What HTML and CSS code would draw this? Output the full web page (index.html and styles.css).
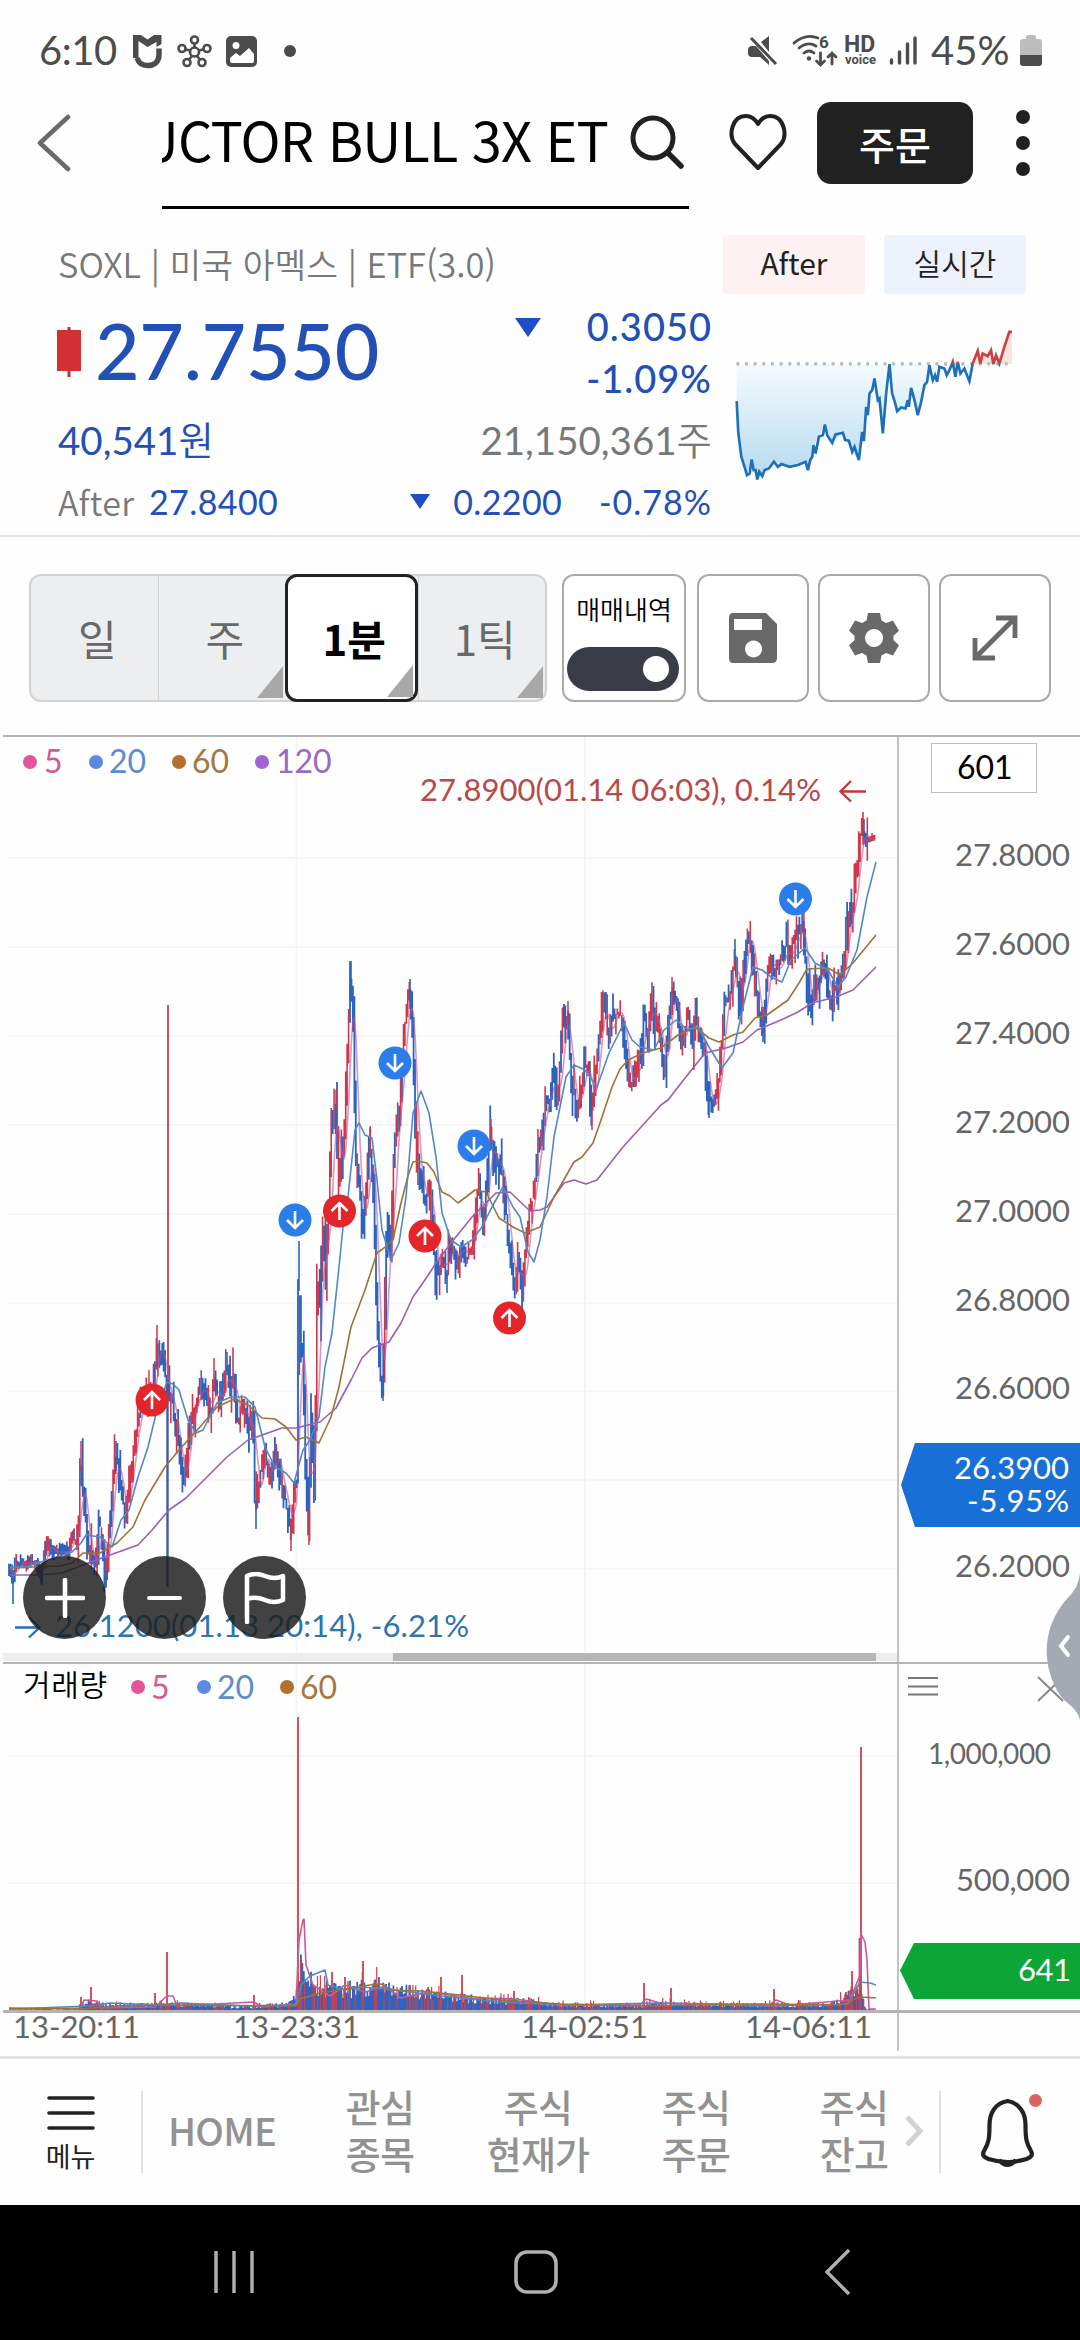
FILE: index.html
```html
<!DOCTYPE html>
<html lang="ko">
<head>
    <meta charset="UTF-8">
    <meta name="viewport" content="width=device-width, initial-scale=1.0">
    <title>SOXL 차트</title>
    <link rel="stylesheet" href="styles.css">
</head>
<body>
    <!-- Status bar -->
    <div class="status-bar">
        <span class="clock">6:10</span>
        <svg class="status-left" viewBox="130 30 172 44" width="172" height="44">
            <path d="M133 35l8 0 6.500 4.500 6.500-4.500h7.500v9l-5 3v-5l-9 5-9-6v17h-5.500z" fill="#4c4c4c"/>
            <path d="M137 58c2 6 6 7.500 10.500 7.500 7 0 11.500-4 11.500-11v-6" fill="none" stroke="#4c4c4c" stroke-width="5.500"/>
            <g fill="none" stroke="#4c4c4c" stroke-width="2.600">
                <circle cx="194.500" cy="52" r="4.500"/><circle cx="194.500" cy="40" r="3.500"/>
                <circle cx="182" cy="48.500" r="3.500"/><circle cx="207" cy="48.500" r="3.500"/>
                <circle cx="187" cy="62.500" r="3.500"/><circle cx="202" cy="62.500" r="3.500"/>
                <path d="M194.500 44v4M186 49.500l4 1M203 49.500l-4 1M189 59.500l3-3.500M200 59.500l-3-3.500"/>
            </g>
            <rect x="226" y="36" width="31" height="31" rx="5" fill="#4c4c4c"/>
            <circle cx="236" cy="45.500" r="3.500" fill="#fff"/>
            <path d="M230 58l6-5 4 3 9-8 5 6v7q0 2-2 2h-20q-2 0-2-2z" fill="#fff"/>
            <circle cx="290" cy="51" r="6" fill="#4c4c4c"/>
        </svg>
        <svg class="status-right" viewBox="744 30 180 44" width="180" height="44">
            <g fill="#4c4c4c">
                <path d="M747 50q0-4 4-4h4l13 15v4l-9-8h-8q-4 0-4-4zM760 42l8-6v16z"/>
                <path d="M750 38l25 26" stroke="#4c4c4c" stroke-width="3"/>
                <circle cx="808" cy="58.500" r="2.200"/>
            </g>
            <g fill="none" stroke="#4c4c4c" stroke-width="2.800" stroke-linecap="round">
                <path d="M793 43q12-10 24-5M798 48q9-7 17-2M803 53q5-4 10 0"/>
                <path d="M819.500 53v12M815.500 61l4 4 4-4M831 64v-11M827 57l4-4 4 4"/>
            </g>
            <text x="818" y="48" class="st-six">6</text>
            <text x="843" y="52" class="st-hd">HD</text>
            <text x="844" y="64" class="st-voice">voice</text>
            <g stroke="#4c4c4c" stroke-width="3.400" stroke-linecap="round">
                <path d="M890.500 60v3M898.500 52v11M906.500 44v19M914 38v25"/>
            </g>
        </svg>
        <span class="battery-text">45%</span>
        <svg class="battery" viewBox="0 0 22 32" width="22" height="32">
            <path d="M6 4V2q0-2 2-2h6q2 0 2 2v2h3q3 0 3 3v13H0V7q0-3 3-3z" fill="#bdbdbd"/>
            <path d="M0 20h22v8q0 3-3 3H3q-3 0-3-3z" fill="#4c4c4c"/>
        </svg>
    </div>

    <!-- Title bar -->
    <div class="title-bar">
        <svg class="back" viewBox="0 0 34 58" width="34" height="58">
            <path d="M31 3L3 29l28 26" fill="none" stroke="#6a6a6a" stroke-width="4.500" stroke-linecap="round" stroke-linejoin="round"/>
        </svg>
        <div class="search-box">
            <div class="ticker-name"><span>UCTOR BULL 3X ET</span></div>
            <svg viewBox="0 0 58 58" width="58" height="58">
                <circle cx="24" cy="24" r="20" fill="none" stroke="#212121" stroke-width="5"/>
                <path d="M39 39l13 13" stroke="#212121" stroke-width="5.500" stroke-linecap="round"/>
            </svg>
        </div>
        <svg class="heart" viewBox="0 0 58 58" width="58" height="58">
            <path d="M29 55L6 31C-1 22 3 3 17 3c6 0 9 3 12 8 3-5 6-8 12-8 14 0 18 19 11 28z" fill="none" stroke="#212121" stroke-width="4" stroke-linejoin="round"/>
        </svg>
        <button class="order-btn">주문</button>
        <div class="more"><i></i><i></i><i></i></div>
    </div>

    <!-- Quote summary -->
    <div class="quote">
        <div class="quote-info">
            <div class="market">SOXL | 미국 아멕스 | ETF(3.0)</div>
            <div class="price-row">
                <svg class="candle" viewBox="0 0 24 50" width="24" height="50">
                    <path d="M12 0v50" stroke="#c03030" stroke-width="3"/>
                    <rect y="3" width="24" height="41" fill="#d33034"/>
                </svg>
                <span class="price">27.7550</span>
                <span class="arrow"></span>
                <div class="change">
                    <div>0.3050</div>
                    <div>-1.09%</div>
                </div>
            </div>
            <div class="won-row">
                <span class="won">40,541<b>원</b></span>
                <span class="volume">21,150,361<b>주</b></span>
            </div>
            <div class="after-row">
                <span class="after-label">After</span>
                <span class="after-price">27.8400</span>
                <span class="arrow small"></span>
                <span class="after-diff">0.2200</span>
                <span class="after-rate">-0.78%</span>
            </div>
        </div>
        <div class="quote-side">
            <div class="tags">
                <span class="tag tag-after">After</span>
                <span class="tag tag-live">실시간</span>
            </div>
            <svg class="mini-chart" viewBox="520 900 850 500" width="283" height="167">
                <defs>
                    <linearGradient id="blueFill" gradientUnits="userSpaceOnUse" x1="0" y1="1030" x2="0" y2="1380">
                        <stop offset="0" stop-color="#f5fbfe"/>
                        <stop offset="1" stop-color="#b4daef"/>
                    </linearGradient>
                    <clipPath id="above"><rect x="520" y="900" width="850" height="131"/></clipPath>
                    <clipPath id="below"><rect x="520" y="1031" width="850" height="369"/></clipPath>
                    <polyline id="mini" points="531,1143 536,1240 545,1310 556,1345 562,1365 570,1360 576,1318 582,1350 588,1350 593,1378 599,1355 608,1368 615,1350 628,1345 643,1325 655,1340 665,1332 690,1340 715,1335 738,1325 745,1350 752,1320 758,1310 762,1275 768,1300 778,1250 790,1245 796,1213 803,1245 818,1268 828,1243 850,1238 857,1260 868,1262 878,1295 885,1280 898,1320 908,1235 913,1263 920,1160 925,1185 930,1120 938,1110 945,1075 955,1140 960,1135 970,1240 980,1120 990,1032 998,1120 1006,1145 1013,1173 1025,1162 1038,1165 1045,1140 1048,1160 1055,1103 1065,1140 1075,1185 1085,1145 1095,1095 1103,1085 1110,1035 1120,1080 1127,1065 1133,1085 1140,1040 1155,1045 1162,1065 1170,1050 1180,1025 1188,1070 1195,1025 1203,1060 1215,1045 1230,1083 1240,1030 1255,992 1263,1030 1270,1000 1285,1008 1295,990 1302,1032 1310,1005 1320,1030 1335,980 1350,935 1358,935"/>
                    <path id="miniArea" d="M531 1031V1143L536 1240 545 1310 562 1365 576 1318 593 1378 615 1350 643 1325 690 1340 738 1325 745 1350 762 1275 778 1250 796 1213 818 1268 850 1238 878 1295 898 1320 920 1160 945 1075 970 1240 990 1032 1013 1173 1038 1165 1055 1103 1075 1185 1110 1035 1133 1085 1140 1040 1170 1050 1215 1045 1230 1083 1240 1031z"/>
                </defs>
                <use href="#miniArea" fill="url(#blueFill)"/>
                <path d="M1240 1031L1255 992 1285 1008 1320 1030 1350 935 1358 935V1031z" fill="#fbe3e1"/>
                <path d="M530 1031H1350" stroke="#b9b9b9" stroke-width="10" stroke-dasharray="9 17"/>
                <use href="#mini" class="mini-line blue" clip-path="url(#below)"/>
                <use href="#mini" class="mini-line red" clip-path="url(#above)"/>
            </svg>
        </div>
    </div>

    <!-- Period and tool buttons -->
    <div class="toolbar">
        <div class="periods">
            <button class="period">일</button>
            <button class="period has-menu">주</button>
            <button class="period has-menu active">1분</button>
            <button class="period has-menu">1틱</button>
        </div>
        <div class="trade-toggle">
            <span>매매내역</span>
            <div class="switch"><i></i></div>
        </div>
        <button class="tool">
            <svg viewBox="0 0 50 52" width="50" height="52">
                <path fill-rule="evenodd" fill="#696969" d="M5 1h33l11 11v34q0 5-5 5H5q-4 0-4-5V6q0-5 4-5zM6 7v11h28V7zM25.500 28.500a8.500 8.500 0 1 0 .1 0z"/>
            </svg>
        </button>
        <button class="tool">
            <svg viewBox="0 0 50 50" width="50" height="50">
                <path fill-rule="evenodd" fill="#696969" d="M19 0h12l1.500 7.500 4.500 2.600 7-2.600 6 10.200-5.500 5v4.600l5.500 5-6 10.200-7-2.600-4.500 2.600L31 50H19l-1.500-7.500-4.500-2.600-7 2.600-6-10.200 5.500-5v-4.600l-5.500-5L6 7.500l7 2.600 4.500-2.600zM25 16a9 9 0 1 0 .1 0z"/>
            </svg>
        </button>
        <button class="tool">
            <svg viewBox="0 0 46 46" width="46" height="46">
                <path fill="none" stroke="#696969" stroke-width="4.800" d="M3 43L43 3M24 3h19v20M3 23v20h20"/>
            </svg>
        </button>
    </div>

    <!-- Price and volume chart -->
    <div class="chart">
        <svg class="chart-svg" viewBox="0 734 1080 1322" width="1080" height="1322">
            <g class="grid">
                <path d="M8 858H897M8 947H897M8 1036H897M8 1125H897M8 1214H897M8 1303H897M8 1391H897M8 1480H897M8 1569H897M8 1756H897M8 1883H897"/>
                <path d="M296.500 736V2010M585 736V2010"/>
            </g>
            <g id="volume"></g>
            <g id="candles"></g>
            <g id="averages"></g>

            <rect x="3" y="1653" width="894" height="8" fill="#ededed"/>
            <rect x="393" y="1653" width="483" height="8" fill="#b6b6b6"/>
            <g class="frame">
                <path d="M3 736H1080M3 1663H1080" stroke-width="2"/>
                <path d="M898 736V2051" stroke-width="1.600"/>
                <path d="M3 2011.500H1080" stroke-width="3"/>
            </g>

            <!-- moving average legend -->
            <g class="legend">
                <circle cx="30" cy="762" r="7" fill="#e2559a"/><text x="44" y="772.500" fill="#cf5c94">5</text>
                <circle cx="96" cy="762" r="7" fill="#5a8ae4"/><text x="109" y="772.500" fill="#5b8ccb">20</text>
                <circle cx="179" cy="762" r="7" fill="#b4702c"/><text x="192" y="772.500" fill="#a5773f">60</text>
                <circle cx="262" cy="762" r="7" fill="#a063d8"/><text x="276" y="772.500" fill="#9a68c4">120</text>
                <text x="23" y="1696" class="vol-title" textLength="84">거래량</text>
                <circle cx="138" cy="1687" r="7" fill="#e2559a"/><text x="151" y="1698.500" fill="#cf5c94">5</text>
                <circle cx="204" cy="1687" r="7" fill="#5a8ae4"/><text x="217" y="1698.500" fill="#5b8ccb">20</text>
                <circle cx="287" cy="1687" r="7" fill="#b4702c"/><text x="300" y="1698.500" fill="#a5773f">60</text>
            </g>

            <text x="420" y="800.500" class="hi" textLength="401">27.8900(01.14 06:03), 0.14%</text>
            <path d="M866 791.500H841M851 781l-10.500 10.500 10.500 10" class="hi-arrow"/>
            <text x="55" y="1636.500" class="lo" textLength="414">26.1200(01.13 20:14), -6.21%</text>
            <path d="M15 1627.500H39M29 1617l10.500 10.500-10.500 10" class="lo-arrow"/>

            <g id="markers"></g>

            <!-- right axis -->
            <rect x="931.500" y="743.500" width="105" height="49" fill="#fff" stroke="#bdbdbd"/>
            <text x="957" y="779" class="count">601</text>
            <g class="axis">
                <text x="955" y="866" textLength="115">27.8000</text>
                <text x="955" y="955" textLength="115">27.6000</text>
                <text x="955" y="1044" textLength="115">27.4000</text>
                <text x="955" y="1133" textLength="115">27.2000</text>
                <text x="955" y="1222" textLength="115">27.0000</text>
                <text x="955" y="1311" textLength="115">26.8000</text>
                <text x="955" y="1399" textLength="115">26.6000</text>
                <text x="955" y="1577" textLength="115">26.2000</text>
                <text x="928" y="1764" class="small" textLength="123">1,000,000</text>
                <text x="956" y="1890.500" textLength="114">500,000</text>
                <text x="13" y="2038" textLength="127">13-20:11</text>
                <text x="233" y="2038" textLength="127">13-23:31</text>
                <text x="521" y="2038" textLength="127">14-02:51</text>
                <text x="745" y="2038" textLength="127">14-06:11</text>
            </g>
            <path d="M901 1485l14-42h165v84H915z" fill="#186fd6"/>
            <path d="M900 1970.500l14-27.500h166v56H914z" fill="#0ca636"/>
            <g class="tag-text">
                <text x="954" y="1478.500" textLength="115">26.3900</text>
                <text x="967" y="1512" textLength="102">-5.95%</text>
                <text x="1018" y="1980.500" textLength="53">641</text>
            </g>
            <path d="M908 1678h30M908 1686.500h30M908 1694.500h30" stroke="#777" stroke-width="2"/>
            <path d="M1038 1677l25 24M1063 1677l-25 24" stroke="#888" stroke-width="2"/>
            <path d="M1080 1573c-2 18-11 22-18 32-20 27-20 62-2 90 6 9 17 12 20 25z" fill="#a4a9b4"/>
            <path d="M1068 1637l-7 9 7 9" fill="none" stroke="#fff" stroke-width="4" stroke-linecap="round"/>
        </svg>
        <div class="float-buttons">
            <button><svg viewBox="0 0 40 40" width="40" height="40"><path d="M20 2v36M2 20h36" stroke="#fff" stroke-width="4.500" stroke-linecap="round"/></svg></button>
            <button><svg viewBox="0 0 40 40" width="40" height="40"><path d="M4 20h31" stroke="#fff" stroke-width="4" stroke-linecap="round"/></svg></button>
            <button><svg viewBox="0 0 44 52" width="44" height="52"><path d="M4 50V4q8-4 18 0 10 4 18 0v24q-9 4-18 0-9-4-18-1" fill="none" stroke="#fff" stroke-width="4.500" stroke-linecap="round" stroke-linejoin="round"/></svg></button>
        </div>
    </div>

    <!-- App menu -->
    <div class="app-nav">
        <div class="menu">
            <svg viewBox="0 0 48 36" width="48" height="36"><path d="M2 3h44M2 18h44M2 33h44" stroke="#222" stroke-width="3.600" stroke-linecap="round"/></svg>
            <span>메뉴</span>
        </div>
        <div class="nav-items">
            <span>HOME</span>
            <span>관심<br>종목</span>
            <span>주식<br>현재가</span>
            <span>주식<br>주문</span>
            <span>주식<br>잔고</span>
            <svg class="nav-more" viewBox="0 0 20 32" width="20" height="32"><path d="M3 2l13 14L3 30" fill="none" stroke="#d2d2d2" stroke-width="5"/></svg>
        </div>
        <div class="bell">
            <svg viewBox="978 2090 66 80" width="66" height="80">
                <path d="M1007.500 2101c-12 2-18 12-18 24 0 14-1 18-5 25-3 5-1 7 4 9q19 6 38 0c5-2 7-4 4-9-4-7-5-11-5-25 0-12-6-22-18-24z" fill="none" stroke="#222" stroke-width="4.200"/>
                <path d="M999 2160q8 10 17 0" fill="none" stroke="#222" stroke-width="4.200"/>
                <circle cx="1035.500" cy="2100.500" r="6.500" fill="#d9635f"/>
            </svg>
        </div>
    </div>

    <!-- System navigation -->
    <div class="system-nav">
        <svg viewBox="0 0 44 46" width="44" height="46"><path d="M4 2v42M22 2v42M40 2v42" stroke="#b0b0b0" stroke-width="3.400"/></svg>
        <svg viewBox="0 0 46 46" width="46" height="46"><rect x="3" y="3" width="40" height="40" rx="11" fill="none" stroke="#b0b0b0" stroke-width="3.600"/></svg>
        <svg viewBox="0 0 30 48" width="30" height="48"><path d="M26 2L4 24l22 22" fill="none" stroke="#b0b0b0" stroke-width="3.400"/></svg>
    </div>

    <script src="chart.js"></script>
</body>
</html>
```
FILE: styles.css
```css
* {
    box-sizing: border-box;
}

body {
    margin: 0;
    width: 1080px;
    height: 2340px;
    background: #fefefe;
    font-family: "Noto Sans CJK KR", sans-serif;
    color: #000;
    display: flex;
    flex-direction: column;
    overflow: hidden;
}

button {
    font-family: inherit;
    padding: 0;
    margin: 0;
    border: none;
}

svg {
    display: block;
    flex: none;
}

/* status bar */
.status-bar {
    height: 100px;
    padding: 0 38px 0 39px;
    display: flex;
    align-items: center;
    color: #4c4c4c;
    font-family: Lato, sans-serif;
    font-size: 40px;
    flex: none;
}

.clock {
    width: 91px;
    letter-spacing: -0.5px;
}

.status-left {
    margin-top: 4px;
}

.status-right {
    margin: 4px 6px 0 auto;
}

.st-six {
    font: bold 17px Roboto, sans-serif;
    fill: #4c4c4c;
}

.st-hd {
    font: bold 23px Roboto, sans-serif;
    fill: #4c4c4c;
}

.st-voice {
    font: bold 13px Roboto, sans-serif;
    fill: #4c4c4c;
}

.battery-text {
    width: 89px;
    white-space: nowrap;
}

.battery {
    margin-top: 2px;
}

/* title bar */
.title-bar {
    height: 130px;
    padding-left: 37px;
    display: flex;
    align-items: flex-start;
    flex: none;
}

.back {
    margin-top: 14px;
}

.search-box {
    width: 527px;
    height: 109px;
    margin-left: 91px;
    border-bottom: 3px solid #000;
    display: flex;
    align-items: flex-start;
}

.search-box svg {
    margin: 14px 0 0 21px;
}

.ticker-name {
    width: 446px;
    height: 80px;
    display: flex;
    justify-content: flex-end;
    overflow: hidden;
    white-space: nowrap;
    font-size: 54px;
    line-height: 78px;
    letter-spacing: -0.8px;
}

.heart {
    margin: 13px 0 0 40px;
}

.order-btn {
    width: 156px;
    height: 82px;
    margin: 2px 0 0 30px;
    border-radius: 14px;
    background: #212121;
    color: #fff;
    font-size: 39px;
    line-height: 76px;
    font-weight: 500;
}

.more {
    height: 66px;
    margin: 10px 0 0 43px;
    display: flex;
    flex-direction: column;
    justify-content: space-between;
}

.more i {
    width: 14px;
    height: 14px;
    border-radius: 50%;
    background: #212121;
}

/* quote */
.quote {
    height: 307px;
    border-bottom: 2px solid #e6e6e6;
    display: flex;
    flex: none;
}

.quote-info {
    width: 712px;
    padding-left: 57px;
    font-family: Lato, "Noto Sans CJK KR", sans-serif;
    color: #2350b4;
}

.quote-info b {
    font-family: "Noto Sans CJK KR", sans-serif;
    font-weight: 350;
}

.market {
    height: 70px;
    line-height: 66px;
    font-size: 34.5px;
    font-weight: 350;
    font-family: "Noto Sans CJK KR", sans-serif;
    color: #77787a;
    padding-left: 1px;
    white-space: nowrap;
}

.price-row {
    height: 108px;
    display: flex;
}

.candle {
    margin-top: 27px;
}

.price {
    width: 291px;
    margin-left: 14px;
    font-size: 77px;
    line-height: 100px;
    font-weight: 500;
    letter-spacing: -0.3px;
}

.arrow {
    width: 0;
    height: 0;
    margin: 18px 0 0 129px;
    border: 13px solid transparent;
    border-top: 19px solid #1f4fc4;
    border-bottom: 0;
}

.arrow.small {
    margin: 20px 0 0 132px;
    border-width: 15px 10px 0;
}

.change {
    flex: 1;
    text-align: right;
    font-size: 38px;
    line-height: 52px;
    font-weight: 500;
    letter-spacing: 1px;
}

.won-row {
    height: 66px;
    display: flex;
    justify-content: space-between;
    font-size: 38.5px;
    line-height: 60px;
}

.won {
    padding-left: 1px;
}

.volume {
    color: #77787a;
}

.after-row {
    height: 60px;
    display: flex;
    font-size: 34px;
    line-height: 56px;
    letter-spacing: 0.4px;
}

.after-label {
    width: 92px;
    padding-left: 1px;
    font-family: "Noto Sans CJK KR", sans-serif;
    font-weight: 350;
    color: #77787a;
}

.after-diff {
    margin-left: 23px;
}

.after-rate {
    margin-left: auto;
    letter-spacing: 1px;
}

.quote-side {
    padding-left: 11px;
}

.tags {
    display: flex;
    gap: 19px;
    padding-top: 5px;
}

.tag {
    width: 142px;
    height: 59px;
    border-radius: 4px;
    text-align: center;
    font-size: 30px;
    line-height: 55px;
    color: #222;
}

.tag-after {
    background: #fdf2f1;
}

.tag-live {
    background: #edf1fc;
    font-weight: 350;
}

.mini-chart {
    margin: 26px 0 0 10px;
}

.mini-line {
    fill: none;
    stroke-width: 8;
}

.mini-line.blue {
    stroke: #1e70b8;
}

.mini-line.red {
    stroke: #cf3f42;
}

/* toolbar */
.toolbar {
    height: 197px;
    padding: 37px 0 0 29px;
    display: flex;
    flex: none;
}

.periods {
    width: 518px;
    height: 128px;
    display: flex;
    flex: none;
    background: #edeef0;
    border: 2px solid #d2d2d2;
    border-radius: 12px;
    margin-right: 15px;
}

.period {
    flex: 1;
    position: relative;
    background: none;
    font-size: 42px;
    line-height: 112px;
    color: #696969;
    padding-left: 6px;
}

.period + .period {
    border-left: 1px solid #d2d2d2;
}

.period.has-menu::after {
    content: "";
    position: absolute;
    right: 2px;
    bottom: 2px;
    border-left: 26px solid transparent;
    border-bottom: 32px solid #a8a8a8;
}

.period.active {
    margin: -2px 0;
    background: #fff;
    border: 3px solid #222;
    border-radius: 12px;
    color: #000;
    font-weight: 700;
}

.trade-toggle {
    width: 124px;
    height: 128px;
    flex: none;
    border: 2px solid #aaa;
    border-radius: 12px;
    background: #fff;
    text-align: center;
    font-size: 26px;
    font-weight: 350;
    line-height: 36px;
    padding-top: 15px;
    margin-right: 11px;
    white-space: nowrap;
}

.switch {
    width: 112px;
    height: 44px;
    margin: 20px 0 0 3px;
    border-radius: 22px;
    background: #3a3c47;
    display: flex;
    justify-content: flex-end;
    align-items: center;
    padding-right: 10px;
}

.switch i {
    width: 26px;
    height: 26px;
    border-radius: 50%;
    background: #fff;
}

.tool {
    width: 112px;
    height: 128px;
    flex: none;
    border: 2px solid #aaa;
    border-radius: 12px;
    background: #fff;
    display: flex;
    align-items: center;
    justify-content: center;
    margin-right: 9px;
}

/* chart */
.chart {
    height: 1322px;
    position: relative;
    flex: none;
}

.grid path {
    stroke: #f3f3f3;
    stroke-width: 1.6;
    fill: none;
}

.frame path {
    stroke: #b4b4b4;
    fill: none;
}

.legend text,
.hi,
.lo,
.axis text,
.tag-text text {
    font-family: Lato, sans-serif;
    font-size: 31px;
}

.legend text {
    font-size: 32px;
}

.legend .vol-title {
    font-family: "Noto Sans CJK KR", sans-serif;
    font-size: 30px;
    font-weight: 350;
    fill: #000;
}

.hi {
    fill: #b8484a;
}

.lo {
    fill: #2f74ad;
}

.hi-arrow,
.lo-arrow {
    fill: none;
    stroke-width: 2.4;
    stroke: #c0393d;
}

.lo-arrow {
    stroke: #2770ac;
}

.count {
    font-family: Lato, sans-serif;
    font-size: 32px;
}

.axis text {
    fill: #666;
}

.axis .small {
    font-size: 28px;
}

.tag-text text {
    fill: #fff;
}

.ma {
    fill: none;
    stroke-width: 1.6;
    stroke-linejoin: round;
}

.float-buttons {
    position: absolute;
    left: 23px;
    top: 822px;
    display: flex;
    gap: 17px;
}

.float-buttons button {
    width: 83px;
    height: 83px;
    border-radius: 50%;
    background: rgba(30, 30, 30, 0.84);
    display: flex;
    align-items: center;
    justify-content: center;
}

/* app menu */
.app-nav {
    height: 149px;
    border-top: 3px solid #e2e2e2;
    display: flex;
    align-items: center;
    flex: none;
}

.menu {
    width: 143px;
    height: 82px;
    border-right: 2px solid #e0e0e0;
    display: flex;
    flex-direction: column;
    align-items: center;
    font-size: 27px;
    line-height: 34px;
    color: #222;
}

.menu svg {
    margin: 4px 0 8px;
}

.nav-items {
    width: 798px;
    height: 82px;
    border-right: 2px solid #e0e0e0;
    display: flex;
    align-items: center;
    position: relative;
}

.nav-items span {
    width: 158px;
    flex: none;
    margin-top: -6px;
    text-align: center;
    font-size: 38px;
    line-height: 47px;
    font-weight: 500;
    color: #929292;
    letter-spacing: -0.8px;
}

.nav-more {
    position: absolute;
    right: 15px;
    top: 24px;
}

.bell {
    margin: -5px 0 0 37px;
}

/* system navigation */
.system-nav {
    height: 135px;
    background: #000;
    display: flex;
    align-items: center;
    padding: 0 225px 2px 212px;
    gap: 257px;
    flex: none;
}

.system-nav svg:last-child {
    margin-left: 7px;
}
```
FILE: chart.js
```js
// Turning points of the price, as x,y on the chart
const path = [
    8,1565, 14,1580, 16,1564, 38,1562, 41,1580, 47,1542, 52,1552, 69,1552, 72,1538, 79,1537, 81,1450,
    84,1500, 88,1540, 95,1570, 100,1520, 103,1550, 106,1580, 110,1520, 116,1452, 121,1485, 126,1518,
    130,1480, 136,1440, 139,1410, 148,1404, 153,1400, 157,1345, 162,1350, 167,1387, 174,1407, 179,1447,
    185,1488, 189,1433, 196,1402, 202,1385, 212,1412, 214,1377, 220,1407, 227,1368, 231,1395, 234,1372,
    238,1422, 245,1405, 250,1436, 254,1412, 256,1510, 260,1483, 265,1445, 270,1480, 277,1450, 282,1485,
    289,1512, 291,1535, 293,1507, 297,1467, 298,1500, 299,1252, 301,1350, 303,1345, 306,1470, 309,1530,
    312,1400, 315,1510, 318,1250, 320,1327, 324,1200, 326,1290, 332,1130, 336,1100, 339,1185, 342,1150,
    344,1160, 347,1075, 350,993, 351,972, 354,1030, 356,1150, 362,1213, 364,1230, 370,1145, 374,1180,
    377,1307, 380,1370, 383,1390, 386,1283, 388,1215, 392,1255, 394,1160, 398,1100, 400,1125, 403,1045,
    406,1020, 410,990, 413,1030, 417,1170, 419,1160, 425,1205, 431,1185, 434,1250, 437,1277, 444,1255,
    447,1280, 450,1240, 458,1262, 462,1240, 465,1258, 472,1250, 477,1212, 479,1175, 484,1235, 487,1180,
    491,1133, 495,1168, 500,1158, 504,1185, 510,1250, 515,1290, 519,1255, 523,1300, 527,1237, 530,1212,
    534,1195, 538,1155, 543,1125, 548,1092, 550,1108, 553,1065, 558,1108, 563,1028, 568,1015, 572,1085,
    578,1110, 584,1072, 589,1062, 592,1115, 597,1067, 603,1003, 605,1002, 609,1042, 614,1015, 620,1008,
    624,1030, 630,1087, 636,1073, 642,1057, 644,1010, 648,1040, 651,995, 656,1030, 659,1018, 665,1080,
    669,1020, 672,990, 678,1010, 681,1050, 689,1012, 693,1045, 696,1015, 702,1042, 705,1048, 709,1106,
    716,1104, 721,1067, 725,1000, 730,1000, 735,955, 741,1008, 744,965, 749,927, 753,955, 758,1000,
    763,1030, 767,980, 772,955, 775,972, 781,965, 787,945, 790,965, 793,945, 798,937, 803,925, 807,975,
    812,1018, 815,980, 819,988, 823,958, 828,985, 832,1002, 835,982, 839,988, 841,970, 844,978, 849,905,
    852,928, 855,890, 859,860, 860,840, 864,828, 866,842, 868,840, 876,837
];

const ma20 = [
    10,1567, 25,1567, 41,1562, 72,1552, 81,1543, 86,1535, 100,1537, 112,1547, 121,1520, 129,1510, 138,1477,
    148,1447, 157,1410, 167,1382, 173,1384, 179,1390, 188,1420, 196,1433, 203,1430, 217,1403, 231,1397, 245,1397,
    255,1407, 265,1447, 275,1467, 286,1473, 294,1483, 303,1450, 310,1440, 319,1417, 325,1367, 332,1333,
    339,1267, 343,1227, 348,1197, 355,1130, 359,1123, 365,1135, 372,1138, 377,1180, 382,1230, 391,1260,
    399,1243, 406,1197, 413,1113, 421,1091, 429,1113, 436,1157, 442,1213, 451,1240, 461,1247, 472,1240,
    482,1227, 492,1207, 503,1187, 513,1207, 520,1217, 528,1252, 534,1262, 540,1240, 547,1197, 554,1137, 566,1077,
    574,1065, 585,1070, 597,1087, 609,1053, 624,1023, 632,1040, 640,1047, 654,1050, 664,1030, 676,1020, 688,1030,
    698,1027, 709,1047, 722,1068, 733,1053, 743,1007, 753,967, 762,970, 771,977, 782,982, 791,960, 805,948,
    815,963, 828,970, 838,987, 846,977, 857,950, 867,897, 876,862
];

const ma60 = [
    10,1568, 60,1566, 72,1563, 83,1553, 100,1553, 117,1543, 133,1527, 145,1500, 165,1467, 179,1450, 200,1427,
    217,1407, 234,1399, 248,1405, 262,1418, 275,1419, 286,1427, 296,1440, 306,1437, 319,1443, 331,1417,
    339,1387, 351,1327, 365,1290, 377,1253, 384,1248, 393,1240, 401,1203, 408,1176, 413,1162, 418,1161, 427,1163, 434,1172, 442,1192,
    450,1196, 458,1203, 475,1190, 486,1192, 499,1218, 513,1227, 525,1233, 540,1227, 554,1197, 574,1162, 582,1157, 593,1143,
    601,1120, 612,1087, 620,1069, 628,1060, 643,1053, 661,1048, 678,1035, 695,1027, 709,1038, 719,1042, 733,1035, 743,1032,
    755,1018, 767,1015, 788,1000, 799,983, 807,969, 828,968, 840,975, 853,963, 876,935
];

const ma120 = [
    10,1575, 38,1575, 62,1573, 83,1565, 110,1555, 138,1545, 152,1530, 169,1510, 186,1498, 207,1477, 227,1457,
    248,1440, 282,1428, 296,1428, 320,1422, 336,1408, 351,1380, 362,1358, 372,1348, 389,1342, 401,1323, 413,1297, 427,1277,
    436,1263, 451,1243, 472,1217, 496,1193, 510,1192, 530,1211, 540,1210, 547,1207, 564,1183, 574,1180,
    586,1184, 597,1180, 623,1147, 661,1105, 668,1100, 678,1087, 705,1053, 726,1048, 743,1042, 757,1030, 781,1020,
    798,1012, 812,1003, 836,997, 853,990, 876,967
];

const BASE = 2011;
let seed = 11;

// Seeded so that every load draws the same bars
function rand() {
    seed = (seed * 16807) % 2147483647;
    return seed / 2147483647;
}

function valueAt(list, x) {
    for (let i = 2; i < list.length; i += 2) {
        if (x <= list[i]) {
            const t = (x - list[i - 2]) / (list[i] - list[i - 2]);
            return list[i - 1] + (list[i + 1] - list[i - 1]) * t;
        }
    }
    return list[list.length - 1];
}

function add(parent, name, attrs) {
    const el = document.createElementNS('http://www.w3.org/2000/svg', name);
    for (const key in attrs) el.setAttribute(key, attrs[key]);
    document.getElementById(parent).appendChild(el);
}

function toPath(list) {
    let d = '';
    for (let i = 0; i < list.length; i += 2) {
        d += (i ? 'L' : 'M') + list[i].toFixed(1) + ' ' + list[i + 1].toFixed(1);
    }
    return d;
}

function drawCandles() {
    let red = '';
    let blue = '';
    const mids = [];
    const ma5 = [];
    for (let x = 9; x <= 876; x += 1.445) {
        const flat = x > 868;
        const quiet = x < 75;
        const a = valueAt(path, x - 0.9);
        const b = valueAt(path, x + 0.9);
        const shift = flat ? 0 : (rand() - 0.5) * (quiet ? 4 : 12);
        const wick = () => flat ? 2.5 : quiet ? 2 + rand() * 7 : 2 + Math.pow(rand(), 2.5) * 22;
        const top = Math.min(a, b) - wick() + shift;
        const bottom = Math.max(a, b) + wick() + shift;
        const bar = `M${x.toFixed(1)} ${top.toFixed(1)}V${bottom.toFixed(1)}`;
        const up = flat || (a - b > 1 ? rand() < 0.72 : a - b < -1 ? rand() < 0.15 : rand() < 0.4);
        if (up) red += bar; else blue += bar;
        mids.push((a + b) / 2);
        const last = mids.slice(-5);
        ma5.push(x, last.reduce((s, v) => s + v, 0) / last.length);
    }
    add('candles', 'path', { d: red, stroke: '#d0384a', 'stroke-width': 1.6 });
    add('candles', 'path', { d: blue, stroke: '#2c64bd', 'stroke-width': 1.8 });
    add('candles', 'path', { d: 'M168 1005V1390', stroke: '#b8474c', 'stroke-width': 1.8 });
    add('candles', 'path', { d: 'M167.500 1380V1587', stroke: '#3d5c9e', 'stroke-width': 2.4 });
    // single wicks that stick out of the body
    add('candles', 'path', { d: 'M81 1441v30M157 1325v30M149 1370v30M214 1358v20M291 1520v31M309 1510v35M336 1090v20M370 1128v30M491 1119v25M568 1001v20M672 977v20M804 912v25M592 1110v20M872 833v8', stroke: '#d0384a', 'stroke-width': 1.5 });
    add('candles', 'path', { d: 'M13 1570v34M116 1441v30M106 1570v17M227 1352v20M256 1500v29M299 1241v50M351 961v30M410 979v30M383 1380v21M447 1270v23M763 1020v22M709 1090v28M864 819v20M735 939v20', stroke: '#2c64bd', 'stroke-width': 1.6 });
    add('averages', 'path', { d: toPath(ma5), stroke: '#c2529c', class: 'ma', opacity: 0.6 });
}

function drawAverages() {
    add('averages', 'path', { d: toPath(ma120), stroke: '#9560bb', class: 'ma' });
    add('averages', 'path', { d: toPath(ma60), stroke: '#a07334', class: 'ma' });
    add('averages', 'path', { d: toPath(ma20), stroke: '#5189c6', class: 'ma' });
}

function drawVolume() {
    // average bar height along the session
    const level = [8,2, 78,2, 82,12, 100,8, 165,8, 175,8, 250,5, 290,9, 297,20, 300,55, 315,30, 340,26, 360,30,
        380,32, 400,25, 440,20, 480,15, 520,12, 560,8, 640,7, 655,10, 700,8, 830,8, 850,20, 858,40, 862,18, 866,2, 876,2];
    let red = '';
    let blue = '';
    for (let x = 9; x <= 876; x += 1.445) {
        const h = valueAt(level, x);
        // a solid lower part in blue with thinner red bars between
        blue += `M${x.toFixed(1)} ${BASE}V${(BASE - h * (0.45 + rand() * 0.65)).toFixed(1)}`;
        if (rand() < 0.35) {
            red += `M${(x + 0.7).toFixed(1)} ${BASE}V${(BASE - h * (0.4 + rand())).toFixed(1)}`;
        }
    }
    const spikes = [[81,1997],[91,1987],[155,1993],[167,1952],[254,1995],[298,1717],[301,1959],[332,1972],[345,1977],
        [363,1961],[375,1981],[410,1985],[428,1987],[441,1977],[462,1975],[514,1991],[644,1983],[671,1988],[774,1989],
        [846,1992],[852,1971],[859.5,1938],[861,1747]];
    add('volume', 'path', { d: blue, stroke: '#2f63bd', 'stroke-width': 1.8 });
    add('volume', 'path', { d: red, stroke: '#cf3f4c', 'stroke-width': 1.2 });
    for (const s of spikes) {
        add('volume', 'path', { d: `M${s[0]} ${BASE}V${s[1]}`, stroke: '#cc4248', 'stroke-width': 1.8 });
    }
    add('volume', 'path', { d: 'M9 2009L80 2008 84 2000 97 2001 101 2008 155 2007 167 1996 173 1996 177 2006 254 2002 262 2007 296 2004 299 1940 303 1920 304 1919 306 1965 313 1985 330 1996 345 1985 365 1992 385 1986 400 1998 430 1992 470 1998 515 1999 560 2005 640 2005 646 1999 660 2003 770 2005 776 2000 790 2005 850 2000 860 1975 861 1934 865 1942 867 1960 869 2009 876 2009', class: 'ma', stroke: '#c85a9c' });
    add('volume', 'path', { d: 'M9 2009L90 2006 110 2003 160 2005 180 2003 250 2006 296 2005 301 1985 310 1976 325 1970 328 1985 345 1990 362 1987 385 1989 410 1992 450 1997 500 2002 560 2005 660 2003 770 2006 848 2004 860 1982 870 1983 876 1985', class: 'ma', stroke: '#5189c6' });
    add('volume', 'path', { d: 'M9 2008L80 2009 120 2006 170 2005 296 2006 300 1999 320 1993 345 1989 370 1985 383 1984 388 1990 420 1991 460 1995 500 2000 560 2004 640 2006 760 2004 840 2005 860 1997 876 1998', class: 'ma', stroke: '#a07334' });
}

function drawMarkers() {
    const sells = [[295,1220],[395,1063],[474,1146],[795.5,899]];
    const buys = [[152,1400],[339.5,1211],[425,1236],[509.5,1318]];
    for (const [x, y] of sells) {
        add('markers', 'circle', { cx: x, cy: y, r: 16.5, fill: '#2b7de9' });
        add('markers', 'path', { d: `M${x} ${y - 9}v17M${x - 8} ${y}l8 8 8-8`, fill: 'none', stroke: '#fff', 'stroke-width': 2.6 });
    }
    for (const [x, y] of buys) {
        add('markers', 'circle', { cx: x, cy: y, r: 16.5, fill: '#e4262b' });
        add('markers', 'path', { d: `M${x} ${y + 9}v-17M${x - 8} ${y}l8-8 8 8`, fill: 'none', stroke: '#fff', 'stroke-width': 2.6 });
    }
}

drawVolume();
drawCandles();
drawAverages();
drawMarkers();
```
